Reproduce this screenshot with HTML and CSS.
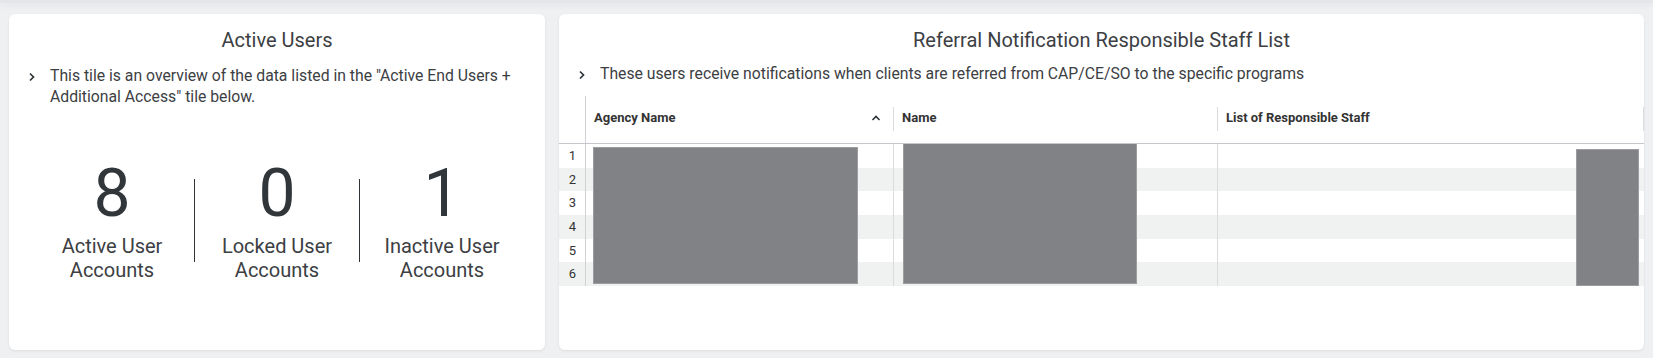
FILE: index.html
```html
<!DOCTYPE html>
<html lang="en">
<head>
  <meta charset="UTF-8">
  <meta name="viewport" content="width=device-width, initial-scale=1.0">
  <title>Users Overview</title>
  <link rel="stylesheet" href="styles.css">
</head>
<body>
  <div class="topbar"></div>

  <div class="tiles">
    <section class="tile">
      <h2 class="tile-title">Active Users</h2>
      <div class="tile-desc">
        <svg class="chevron" width="8" height="10" viewBox="0 0 8 10"><polyline points="2,1.5 5.5,5 2,8.5" fill="none" stroke="#2f3438" stroke-width="1.7"/></svg>
        <p>This tile is an overview of the data listed in the "Active End Users + Additional Access" tile below.</p>
      </div>

      <div class="stats">
        <div class="stat">
          <div class="stat-value">8</div>
          <div class="stat-label">Active User<br>Accounts</div>
        </div>
        <div class="stat-divider"></div>
        <div class="stat">
          <div class="stat-value">0</div>
          <div class="stat-label">Locked User<br>Accounts</div>
        </div>
        <div class="stat-divider"></div>
        <div class="stat">
          <div class="stat-value">1</div>
          <div class="stat-label">Inactive User<br>Accounts</div>
        </div>
      </div>
    </section>

    <section class="tile">
      <h2 class="tile-title">Referral Notification Responsible Staff List</h2>
      <div class="tile-desc tile-desc-tight">
        <svg class="chevron" width="8" height="10" viewBox="0 0 8 10"><polyline points="2,1.5 5.5,5 2,8.5" fill="none" stroke="#2f3438" stroke-width="1.7"/></svg>
        <p>These users receive notifications when clients are referred from CAP/CE/SO to the specific programs</p>
      </div>

      <div class="grid">
        <div class="grid-head">
          <div class="cell-num"></div>
          <div class="head-cell col-agency">
            <span>Agency Name</span>
            <svg class="sort" width="10" height="8" viewBox="0 0 10 8"><polyline points="1.5,6 5,2.5 8.5,6" fill="none" stroke="#2f3438" stroke-width="1.6"/></svg>
          </div>
          <div class="head-cell col-name"><span>Name</span></div>
          <div class="head-cell col-staff"><span>List of Responsible Staff</span></div>
        </div>

        <div class="grid-body">
          <div class="grid-row"><div class="cell-num">1</div><div class="cell col-agency"></div><div class="cell col-name"></div><div class="cell col-staff"></div></div>
          <div class="grid-row"><div class="cell-num">2</div><div class="cell col-agency"></div><div class="cell col-name"></div><div class="cell col-staff"></div></div>
          <div class="grid-row"><div class="cell-num">3</div><div class="cell col-agency"></div><div class="cell col-name"></div><div class="cell col-staff"></div></div>
          <div class="grid-row"><div class="cell-num">4</div><div class="cell col-agency"></div><div class="cell col-name"></div><div class="cell col-staff"></div></div>
          <div class="grid-row"><div class="cell-num">5</div><div class="cell col-agency"></div><div class="cell col-name"></div><div class="cell col-staff"></div></div>
          <div class="grid-row"><div class="cell-num">6</div><div class="cell col-agency"></div><div class="cell col-name"></div><div class="cell col-staff"></div></div>

          <!-- redacted content -->
          <div class="redact redact-agency"></div>
          <div class="redact redact-name"></div>
          <div class="redact redact-staff"></div>
        </div>
      </div>
    </section>
  </div>
</body>
</html>
```

FILE: styles.css
```css
:root {
  --text: #3c4043;
  --dark: #30363a;
  --line: #dadcdc;
  --stripe: #f0f2f1;
  --redact: #818285;
}

* {
  margin: 0;
  padding: 0;
  box-sizing: border-box;
}

body {
  font-family: Roboto, 'Noto Sans', Arial, sans-serif;
  background-color: #eef0f2;
  color: var(--text);
  height: 358px;
  overflow: hidden;
}

.topbar {
  height: 3px;
  background: #e4e6e9;
  box-shadow: 0 2px 6px rgba(0, 0, 0, 0.07);
}

.tiles {
  display: grid;
  grid-template-columns: 536px 1085px;
  gap: 14px;
  padding: 11px 9px 0;
}

.tile {
  background: white;
  border-radius: 6px;
  box-shadow: 0 1px 3px rgba(0, 0, 0, 0.08);
  height: 336px;
  padding-top: 14px;
  overflow: hidden;
}

.tile-title {
  font-size: 20px;
  font-weight: 400;
  line-height: 24px;
  text-align: center;
  color: var(--text);
}

.tile-desc {
  display: flex;
  align-items: flex-start;
  padding: 0 24px 0 19px;
  margin-top: 13px;
  font-size: 15.75px;
  line-height: 21px;
}

.tile-desc-tight {
  margin-top: 11px;
}

.chevron {
  flex: none;
  margin-top: 7px;
  margin-right: 14px;
}

.stats {
  display: flex;
  justify-content: center;
  margin-top: 54px;
}

.stat {
  width: 164px;
  display: flex;
  flex-direction: column;
  align-items: center;
}

.stat-value {
  font-size: 66px;
  line-height: 66px;
  color: var(--dark);
}

.stat-label {
  margin-top: 7px;
  font-size: 20px;
  line-height: 24px;
  text-align: center;
}

.stat-divider {
  width: 1px;
  height: 83px;
  margin-top: 18px;
  background: #2f3438;
}

/* data grid */
.grid {
  margin-top: 12px;
  font-size: 13px;
  color: #333;
}

.grid-head {
  display: flex;
  height: 48px;
  border-bottom: 1px solid #c4c8cc;
}

.cell-num {
  flex: none;
  width: 27px;
  border-right: 1px solid #cfd1d3;
  text-align: center;
  padding-left: 1px;
}

.col-agency {
  width: 308px;
}

.col-name {
  width: 324px;
}

.col-staff {
  flex: 1;
}

.head-cell {
  display: flex;
  align-items: center;
  padding: 0 8px 4px 8px;
  font-weight: 700;
  position: relative;
}

.head-cell::after {
  content: "";
  position: absolute;
  right: 0;
  top: 11px;
  height: 24px;
  width: 1px;
  background: var(--line);
}

.head-cell span {
  flex: 1;
}

.sort {
  margin-right: 5px;
}

.grid-body {
  position: relative;
}

.grid-row {
  display: flex;
  height: 23.7px;
  line-height: 23.7px;
}

.grid-row:nth-child(even) {
  background: var(--stripe);
}

.cell {
  border-right: 1px solid var(--line);
}

.cell.col-staff {
  border-right: none;
}

.redact {
  position: absolute;
  background: var(--redact);
  border: 1px solid #9c9da0;
}

.redact-agency {
  left: 34px;
  top: 3px;
  width: 265px;
  height: 137px;
}

.redact-name {
  left: 344px;
  top: 0;
  width: 234px;
  height: 140px;
  border-top: none;
}

.redact-staff {
  left: 1017px;
  top: 5px;
  width: 63px;
  height: 137px;
}
```
